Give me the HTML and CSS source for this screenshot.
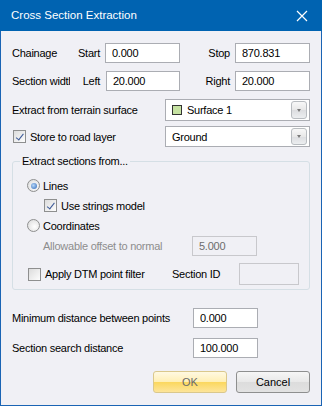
FILE: index.html
```html
<!DOCTYPE html>
<html lang="en">
<head>
  <meta charset="UTF-8">
  <title>Cross Section Extraction</title>
  <link rel="stylesheet" href="styles.css">
</head>
<body>
  <div class="window">
    <div class="titlebar">
      <span class="title">Cross Section Extraction</span>
      <svg class="close" width="12" height="12" viewBox="0 0 12 12">
        <path d="M1 1 L11 11 M11 1 L1 11" stroke="#fff" stroke-width="1.2" fill="none"/>
      </svg>
    </div>

    <div class="content">
      <!-- Chainage / section width -->
      <div class="pair-row row-chainage">
        <span class="name">Chainage</span>
        <span class="sub">Start</span>
        <span class="field"><input class="text" value="0.000"></span>
        <span class="sub2">Stop</span>
        <input class="text" value="870.831">
      </div>
      <div class="pair-row row-width">
        <span class="name"><span class="clip">Section width</span></span>
        <span class="sub">Left</span>
        <span class="field"><input class="text" value="20.000"></span>
        <span class="sub2">Right</span>
        <input class="text" value="20.000">
      </div>

      <!-- Surface / layer -->
      <div class="combo-row row-surface">
        <span class="grow">Extract from terrain surface</span>
        <div class="combo">
          <span class="swatch"></span>
          <span class="combo-text">Surface 1</span>
          <span class="drop"><i></i></span>
        </div>
      </div>
      <div class="combo-row row-layer">
        <label class="check grow"><span class="box checked"></span>Store to road layer</label>
        <div class="combo short">
          <span class="combo-text">Ground</span>
          <span class="drop"><i></i></span>
        </div>
      </div>

      <!-- Group -->
      <fieldset class="group">
        <legend>Extract sections from...</legend>
        <label class="radio row-lines"><span class="dot on"></span>Lines</label>
        <label class="check row-strings"><span class="box checked"></span>Use strings model</label>
        <label class="radio row-coords"><span class="dot"></span>Coordinates</label>
        <div class="offset-row">
          <span class="grow disabled">Allowable offset to normal</span>
          <input class="text small off" value="5.000" disabled>
        </div>
        <div class="filter-row">
          <label class="check filter"><span class="box"></span>Apply DTM point filter</label>
          <span class="section-id">Section ID</span>
          <span class="id-box"></span>
        </div>
      </fieldset>

      <div class="dist-row row-min">
        <span class="grow">Minimum distance between points</span>
        <input class="text small" value="0.000">
      </div>
      <div class="dist-row row-search">
        <span class="grow">Section search distance</span>
        <input class="text small" value="100.000">
      </div>

      <div class="buttons">
        <button class="btn ok">OK</button>
        <button class="btn">Cancel</button>
      </div>
    </div>
  </div>
</body>
</html>
```

FILE: styles.css
```css
body { margin: 0; background: #fff; }
.window { width: 322px; height: 406px; box-sizing: border-box; border: 1px solid #1a64b4; border-top: 0; background: #f0f0f5; font-family: "Liberation Sans", Arial, sans-serif; font-size: 11px; letter-spacing: -0.25px; color: #000; }
.titlebar { height: 31px; margin: 0 -1px; background: #0063b1; display: flex; align-items: center; padding: 0 10px 0 11px; }
.title { flex: 1; color: #fff; font-size: 11.5px; letter-spacing: 0; padding-bottom: 1px; }
.close { margin-right: 4px; }
.content { padding: 0 11px; }

.pair-row { display: grid; grid-template-columns: 61px 27px 80px 1fr 75px; align-items: center; height: 20px; }
.row-chainage { margin-top: 12px; }
.row-width { margin-top: 8px; }
.name { white-space: nowrap; }
.clip { display: block; width: 58px; overflow: hidden; }
.sub { text-align: right; }
.sub2 { text-align: right; padding-right: 5px; }
.row-width .field { padding-left: 6px; }
.row-width .field .text { width: 74px; }
.field { padding-left: 5px; }
.text { box-sizing: border-box; width: 75px; height: 20px; border: 1px solid #abadb3; background: #fff; font: inherit; letter-spacing: inherit; padding: 0 0 0 6px; margin: 0; color: #000; }
.text.small { width: 65px; }
.text.off { background: #f0f0f5; border-color: #c8c8cc; color: #6d6d6d; }

.combo-row { display: flex; align-items: center; height: 22px; }
.row-surface { margin-top: 8px; }
.row-layer { margin-top: 5px; height: 21px; }
.grow { flex: 1; white-space: nowrap; }
.combo { box-sizing: border-box; width: 145px; height: 22px; border: 1px solid #abadb3; background: #fff; display: flex; align-items: center; padding: 0 2px 0 6px; }
.combo.short { height: 21px; }
.swatch { width: 8px; height: 8px; border: 1px solid #333; background: #c6e2a2; margin-right: 5px; }
.combo-text { flex: 1; }
.drop { box-sizing: border-box; width: 16px; height: 18px; border: 1px solid #b8bcc0; border-radius: 3px; background: linear-gradient(#f8f8f8, #e8e8e8 50%, #dcdde0 51%, #eceef0); display: flex; align-items: center; justify-content: center; }
.combo.short .drop { height: 17px; }
.drop i { width: 0; height: 0; border-left: 2.5px solid transparent; border-right: 2.5px solid transparent; border-top: 3px solid #7a7a7a; }

.check, .radio { display: flex; align-items: center; white-space: nowrap; }
.box { box-sizing: border-box; width: 13px; height: 13px; border: 1px solid #8e8f8f; background: linear-gradient(135deg, #dcdcdc, #fdfdfd); margin: 0 4px 0 1px; position: relative; }
.box.checked::after { content: ""; position: absolute; left: 3.5px; top: 0.5px; width: 2.5px; height: 6.5px; border: solid #3d5a98; border-width: 0 1.5px 1.5px 0; transform: rotate(38deg); }
.dot { box-sizing: border-box; width: 13px; height: 13px; border: 1px solid #8e8f8f; border-radius: 50%; background: radial-gradient(circle at 60% 60%, #fff, #d8d8d8); margin-right: 3px; position: relative; }
.dot.on::after { content: ""; position: absolute; left: 2.5px; top: 2.5px; width: 6px; height: 6px; border-radius: 50%; background: radial-gradient(circle at 40% 40%, #b8d8f8, #2a65b8); }

.group { margin: 8px 0 0; padding: 0 0 0 14px; border: 1px solid #d5dfe5; border-radius: 3px; height: 135px; box-sizing: border-box; }
.group legend { padding: 0 2px; margin-left: -7px; }
.row-lines { height: 13px; margin-top: 12px; }
.row-strings { height: 13px; margin: 7px 0 0 16px; }
.row-coords { height: 13px; margin-top: 7px; }
.offset-row { display: flex; align-items: center; height: 19px; margin: 4px 52px 0 16px; }
.disabled { color: #8d8d8d; }
.filter-row { display: flex; align-items: center; margin-top: 8px; height: 22px; }
.filter { width: 145px; }
.filter .box { margin-left: 1px; }
.section-id { width: 67px; }
.id-box { box-sizing: border-box; width: 60px; height: 22px; border: 1px solid #c8c8cc; }

.dist-row { display: flex; align-items: center; height: 20px; margin-right: 52px; }
.row-min { margin-top: 18px; }
.row-search { margin-top: 10px; }

.buttons { display: flex; justify-content: flex-end; gap: 9px; margin-top: 13px; }
.btn { box-sizing: border-box; width: 74px; height: 22px; border: 1px solid #8e8f8f; border-radius: 3px; background: linear-gradient(#f6f6f6, #e8e8e8 50%, #dcdcdc 51%, #e2e2e2); font: inherit; letter-spacing: 0; color: #000; padding: 0; }
.btn.ok { border-color: #dac88c; background: linear-gradient(#fff9e2, #ffefb4 50%, #fbd75e 51%, #fde59a); color: #6a6a6a; }
```
